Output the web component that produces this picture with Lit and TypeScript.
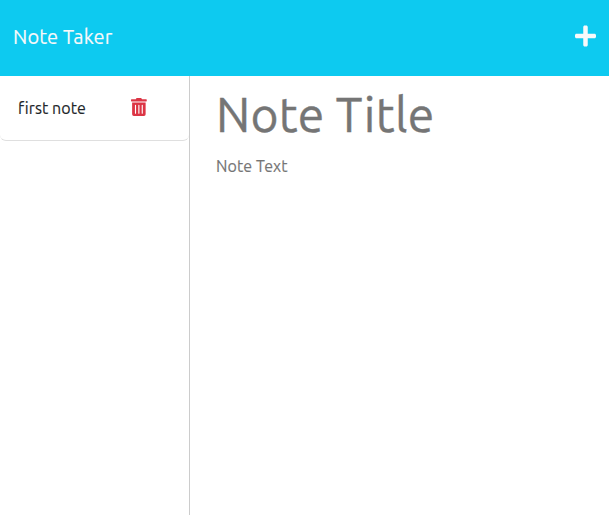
import { LitElement, html, css } from "lit";
import { customElement, state } from "lit/decorators.js";

interface Note {
  title: string;
  text: string;
}

@customElement("app-root")
export class AppRoot extends LitElement {
  static styles = css`
    :host {
      display: flex;
      flex-direction: column;
      height: 100vh;
      overflow: hidden;
      background: #fff;
      color: #212529;
      font: 16px/24px Ubuntu, "Noto Sans", sans-serif;
      letter-spacing: 0.08px;
      -webkit-text-stroke: 0.15px currentColor;
    }
    * { box-sizing: border-box; }
    .navbar {
      flex: none;
      height: 76px;
      padding: 0 13px 4px 13px;
      display: flex;
      align-items: center;
      justify-content: space-between;
      background: #0dcaf0;
      color: #f8f9fa;
    }
    .brand { padding-top: 2px; font-size: 20px; line-height: 30px; letter-spacing: 0.1px; }
    .icon-button {
      display: flex;
      padding: 0;
      border: 0;
      background: none;
      color: inherit;
    }
    .icon-button svg { display: block; fill: currentColor; }
    .main { flex: 1; display: flex; min-height: 0; }
    .sidebar { flex: none; width: 190px; border-right: 1px solid #ccc; }
    .list { list-style: none; margin: 0; padding: 0; }
    .item {
      height: 65px;
      padding: 0 42px 0 18px;
      display: flex;
      align-items: center;
      justify-content: space-between;
      border-bottom: 1px solid #dfdfdf;
      border-radius: 0 0 6px 6px;
    }
    .trash { color: #dc3545; padding-bottom: 2px; }
    .editor {
      flex: 1;
      min-width: 0;
      display: flex;
      flex-direction: column;
      padding: 2px 12px 0 26px;
    }
    .title, .text {
      width: 100%;
      padding: 0;
      border: 0;
      outline: 0;
      background: none;
      color: #212529;
      font-family: inherit;
      letter-spacing: inherit;
      resize: none;
    }
    .title {
      height: 72px;
      font-size: 48px;
      letter-spacing: 0.25px;
      -webkit-text-stroke-width: 0.4px;
    }
    .text { flex: 1; margin-top: 4px; font-size: 16px; line-height: 24px; }
    ::placeholder { color: #757575; opacity: 1; -webkit-text-stroke-color: #757575; }
  `;

  @state() private notes: Note[] = [{ title: "first note", text: "" }];

  render() {
    return html`
      <nav class="navbar">
        <span class="brand">Note Taker</span>
        <button class="icon-button" aria-label="New note">
          <svg width="21" height="24" viewBox="0 0 448 512">
            <path d="M416 208H272V64c0-17.67-14.33-32-32-32h-32c-17.67 0-32 14.33-32 32v144H32c-17.67 0-32 14.33-32 32v32c0 17.67 14.33 32 32 32h144v144c0 17.67 14.33 32 32 32h32c17.67 0 32-14.33 32-32V304h144c17.67 0 32-14.33 32-32v-32c0-17.67-14.33-32-32-32z"/>
          </svg>
        </button>
      </nav>
      <main class="main">
        <aside class="sidebar">
          <ul class="list">
            ${this.notes.map(
              (note) => html`
                <li class="item">
                  <span>${note.title}</span>
                  <button class="icon-button trash" aria-label="Delete note">
                    <svg width="15.75" height="18" viewBox="0 0 448 512">
                      <path d="M32 464a48 48 0 0 0 48 48h288a48 48 0 0 0 48-48V128H32zm272-256a16 16 0 0 1 32 0v224a16 16 0 0 1-32 0zm-96 0a16 16 0 0 1 32 0v224a16 16 0 0 1-32 0zm-96 0a16 16 0 0 1 32 0v224a16 16 0 0 1-32 0zM432 32H312l-9.4-18.7A24 24 0 0 0 281.1 0H166.8a23.72 23.72 0 0 0-21.4 13.3L136 32H16A16 16 0 0 0 0 48v32a16 16 0 0 0 16 16h416a16 16 0 0 0 16-16V48a16 16 0 0 0-16-16z"/>
                    </svg>
                  </button>
                </li>
              `
            )}
          </ul>
        </aside>
        <section class="editor">
          <input class="title" type="text" placeholder="Note Title" />
          <textarea class="text" placeholder="Note Text"></textarea>
        </section>
      </main>
    `;
  }
}
